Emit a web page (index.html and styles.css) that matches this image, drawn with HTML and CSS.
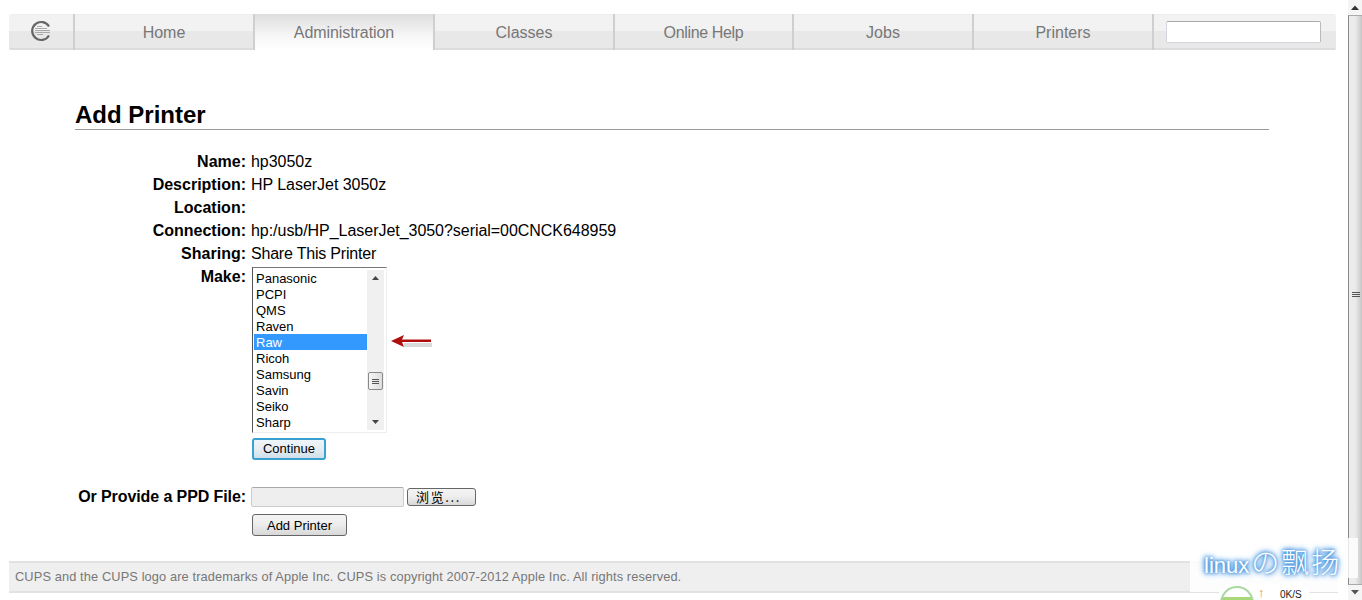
FILE: index.html
```html
<!DOCTYPE html>
<html lang="en">
<head>
<meta charset="utf-8">
<title>Add Printer</title>
<link rel="stylesheet" href="styles.css">
</head>
<body>
<div class="window">
  <div class="page">
    <nav class="nav">
      <div class="tab logo">
        <svg width="24" height="24" viewBox="0 0 24 24">
          <path d="M20 7.500 A9 9 0 1 0 20 16.500" fill="none" stroke="#666" stroke-width="2.200"/>
          <path d="M8 7.500h5M6 9.500h12M6 11.500h15M6 13.500h15M8 15.500h6" stroke="#aaa" stroke-width="1"/>
        </svg>
      </div>
      <a class="tab">Home</a>
      <a class="tab active">Administration</a>
      <a class="tab">Classes</a>
      <a class="tab narrow">Online Help</a>
      <a class="tab">Jobs</a>
      <a class="tab">Printers</a>
      <div class="search"><input class="search-input" type="text"></div>
    </nav>

    <main class="content">
      <h2 class="title">Add Printer</h2>
      <div class="form">
        <div class="label">Name:</div><div class="value">hp3050z</div>
        <div class="label">Description:</div><div class="value">HP LaserJet 3050z</div>
        <div class="label">Location:</div><div class="value"></div>
        <div class="label">Connection:</div><div class="value">hp:/usb/HP_LaserJet_3050?serial=00CNCK648959</div>
        <div class="label">Sharing:</div><div class="value tight">Share This Printer</div>
        <div class="label">Make:</div>
        <div class="value make">
          <div class="make-row">
            <div class="listbox">
              <div class="options">
                <div class="option">Panasonic</div>
                <div class="option">PCPI</div>
                <div class="option">QMS</div>
                <div class="option">Raven</div>
                <div class="option selected">Raw</div>
                <div class="option">Ricoh</div>
                <div class="option">Samsung</div>
                <div class="option">Savin</div>
                <div class="option">Seiko</div>
                <div class="option">Sharp</div>
              </div>
              <div class="list-scroll">
                <svg class="arrow-btn" width="16" height="16" viewBox="0 0 16 16"><path d="M5 10h7L8.500 6z" fill="#444"/></svg>
                <div class="list-thumb"><span></span><span></span><span></span></div>
                <svg class="arrow-btn" width="16" height="16" viewBox="0 0 16 16"><path d="M5 6h7l-3.500 4z" fill="#444"/></svg>
              </div>
            </div>
            <svg class="red-arrow" width="46" height="22" viewBox="0 0 46 22">
              <path d="M14 9h28v4H14z" fill="#aaa" opacity=".45"/>
              <path d="M1 7 L14 1 L12 5.500 H41 V8 H12 L14 13 Z" fill="#b00d0d"/>
            </svg>
          </div>
          <button class="btn continue" type="button">Continue</button>
        </div>
        <div class="label ppd-label">Or Provide a PPD File:</div>
        <div class="value ppd">
          <div class="file-row">
            <div class="file-box"></div>
            <button class="btn browse" type="button">浏览...</button>
          </div>
          <button class="btn add" type="button">Add Printer</button>
        </div>
      </div>
    </main>

    <footer class="footer">CUPS and the CUPS logo are trademarks of Apple Inc. CUPS is copyright 2007-2012 Apple Inc. All rights reserved.</footer>
  </div>

  <div class="page-scroll">
    <svg class="arrow-btn" width="14" height="15" viewBox="0 0 14 15"><path d="M3 10h8L7 5.500z" fill="#333"/></svg>
    <div class="page-track"><span></span><span></span><span></span></div>
    <svg class="arrow-btn" width="14" height="15" viewBox="0 0 14 15"><path d="M3 5h8L7 9.500z" fill="#555"/></svg>
  </div>

  <div class="watermark"><span class="wm-latin">linux</span><span class="wm-cjk">の飘扬</span></div>
  <div class="speed">
    <span class="speed-ring"></span>
    <span class="speed-up">↑</span>
    <span class="speed-text">0K/S</span>
  </div>
</div>
</body>
</html>
```
FILE: styles.css
```css
* { box-sizing: border-box; }
html, body { margin: 0; height: 600px; overflow: hidden; background: #fff; }
body { font-family: "Liberation Sans", Arial, sans-serif; font-size: 16px; color: #000; }

.window { position: relative; display: flex; width: 1362px; height: 600px; overflow: hidden; }
.page { width: 1348px; flex: none; padding: 14px 12px 0 9px; }

.nav {
  display: flex; height: 36px;
  background: linear-gradient(#f2f2f2 0, #f2f2f2 50%, #e8e8e8 50%, #e8e8e8 100%);
  border-bottom: 2px solid #dcdcdc; border-top: 1px solid #eee;
  border-radius: 3px 3px 2px 2px;
}
.tab {
  width: 180px; flex: none; display: flex; align-items: center; justify-content: center;
  margin-top: -1px; height: 36px; padding-top: 1px;
  color: #777; font-size: 16px;
  border-right: 2px solid #cfcfcf;
}
.tab.narrow { width: 179px; letter-spacing: -0.35px; }
.tab.logo { width: 66px; padding: 0 0 2px; }
.active { background: linear-gradient(#dedede, #f6f6f6 60%, #fff); letter-spacing: -0.07px; }
.search { flex: 1; display: flex; align-items: center; padding: 0 15px 0 12px; margin-top: -1px; height: 35px; }
.search-input {
  display: block; width: 100%; height: 22px; margin: 0; background: #fff;
  border: 1px solid #d5d5e0; border-top-color: #aaa; border-right-color: #bbb; border-radius: 2px; padding: 0;
}

.content { margin: 0 67px 0 66px; padding-top: 50px; }
.title {
  margin: 0; height: 30px; line-height: 30px; font-size: 24px; font-weight: bold;
  border-bottom: 1px solid #999;
}
.form {
  display: grid; grid-template-columns: 171px 1fr; column-gap: 5px;
  padding-top: 20px; line-height: 23px;
}
.label { font-weight: bold; text-align: right; height: 23px; }
.value { min-height: 23px; letter-spacing: -0.04px; }
.tight { letter-spacing: -0.2px; }

.make { display: flex; flex-direction: column; align-items: flex-start; padding-left: 1px; padding-top: 2px; height: 220px; }
.make-row { display: flex; align-items: flex-start; }
.listbox {
  display: flex; width: 135px; height: 166px; padding: 2px 2px 2px 1px;
  border: 1px solid #eee; border-top-color: #777; border-left-color: #555; background: #fff;
}
.options { width: 115px; }
.option { height: 16px; line-height: 16px; padding: 1px 0 0 2px; font-size: 13px; color: #000; letter-spacing: 0; }
.selected { background: #3399ff; color: #fff; }
.list-scroll { width: 17px; display: flex; flex-direction: column; justify-content: space-between; background: #f0f0f0; position: relative; }
.arrow-btn { display: block; flex: none; }
.list-thumb {
  position: absolute; left: 1px; top: 102px; width: 15px; height: 18px;
  display: flex; flex-direction: column; align-items: center; justify-content: center; gap: 1px;
  background: linear-gradient(90deg, #f6f6f6, #ddd); border: 1px solid #888; border-radius: 2px;
}
.list-thumb span { width: 7px; height: 1px; background: #555; }
.red-arrow { margin: 67px 0 0 3px; display: block; }

.btn {
  display: block; margin: 0; padding: 0; height: 22px; font-family: "Liberation Sans", Arial, sans-serif; font-size: 13px; color: #000;
  background: linear-gradient(#f4f4f4, #eee 45%, #d8d8d8);
  border: 1px solid #666; border-radius: 3px;
}
.continue { width: 74px; margin-top: 5px; border: 2px solid #3aa0d0; background: linear-gradient(#eef6fb, #e8eef2 45%, #cfe0ea); padding-bottom: 1px; }
.add { width: 95px; margin: 7px 0 0 1px; }
.ppd-label { letter-spacing: -0.09px; }
.ppd { padding-top: 1px; }
.file-row { display: flex; align-items: center; gap: 3px; height: 21px; }
.file-box { width: 153px; height: 20px; background: #eee; border: 1px solid #ccc; border-top-color: #aaa; border-radius: 2px; }
.browse { width: 69px; height: 18px; line-height: 14px; padding-right: 6px; letter-spacing: 1.6px; font-family: "Noto Sans CJK SC", "Liberation Sans", sans-serif; font-size: 13px; }

.footer {
  margin-top: 25px; height: 32px; line-height: 27px; padding-left: 6px; margin-right: -2px;
  background: #efefef; border-top: 2px solid #e2e2e2; border-bottom: 2px solid #e2e2e2;
  color: #777; font-size: 12.8px; letter-spacing: 0.12px;
}

.page-scroll { width: 14px; flex: none; display: flex; flex-direction: column; background: #f5f5f5; }
.page-track {
  flex: 1; display: flex; flex-direction: column; align-items: center; justify-content: center; gap: 1px;
  background: linear-gradient(90deg, #eee, #eaeaea 50%, #c6c6c6);
  border: 1px solid #aaa; border-left-color: #888; border-right: 0; padding-bottom: 12px;
}
.page-track span { width: 8px; height: 1px; background: #555; }

.watermark {
  position: absolute; left: 1190px; top: 538px; width: 158px; height: 54px; padding: 8px 0 0 14px;
  background: rgba(255, 255, 255, .88);
  display: flex; align-items: baseline;
  line-height: 30px; color: #fff; white-space: nowrap;
  text-shadow: 0 0 3px #3f8fdc, 0 0 4px #3f8fdc, 0 0 6px #5aa2e6, 0 0 7px #5aa2e6;
}
.watermark::after {
  content: ""; position: absolute; left: 158px; top: 0; width: 10px; height: 40px;
  background: rgba(255, 255, 255, .8);
}
.wm-latin { font: 22px/30px "Liberation Sans", sans-serif; margin-right: 2px; }
.wm-cjk { font: 300 28px/30px "Noto Sans CJK SC", sans-serif; letter-spacing: 2px; }
.speed {
  position: absolute; left: 1218px; top: 584px; width: 92px; height: 16px; background: #fff;
  border-radius: 14px 14px 0 0;
}
.speed-ring {
  position: absolute; left: 2px; top: 2px; width: 34px; height: 34px; border-radius: 50%;
  border: 2px solid #a9d8a0; background: linear-gradient(#fff 9px, #a8d878 9px);
}
.speed-up { position: absolute; left: 40px; top: 2px; color: #f08020; font: bold 13px/13px "Liberation Sans", sans-serif; }
.speed-text { position: absolute; left: 62px; top: 6px; color: #222; font: 10px/10px "Liberation Sans", sans-serif; }
```
